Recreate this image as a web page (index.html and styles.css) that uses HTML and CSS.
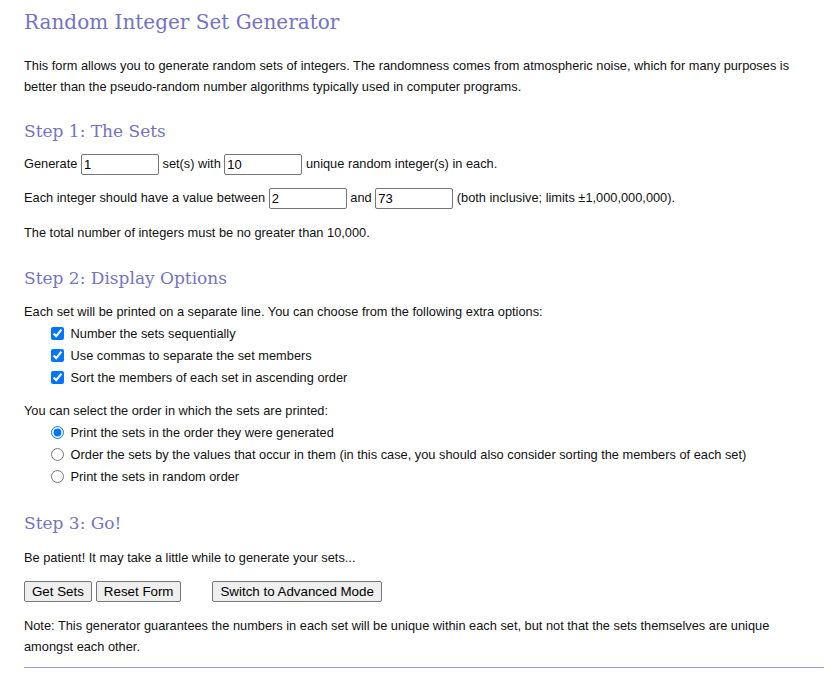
FILE: index.html
```html
<!DOCTYPE html>
<html>
<head>
<meta charset="utf-8">
<title>Random Integer Set Generator</title>
<link rel="stylesheet" href="styles.css">
</head>
<body>
<div class="page">
  <h1 class="title">Random Integer Set Generator</h1>
  <p class="intro">This form allows you to generate random sets of integers. The randomness comes from atmospheric noise, which for many purposes is better than the pseudo-random number algorithms typically used in computer programs.</p>

  <h2 class="step step1">Step 1: The Sets</h2>
  <div class="row row-a">Generate <input class="num" type="text" value="1"> set(s) with <input class="num" type="text" value="10"> unique random integer(s) in each.</div>
  <div class="row row-b">Each integer should have a value between <input class="num" type="text" value="2"> and <input class="num" type="text" value="73"> (both inclusive; limits ±1,000,000,000).</div>
  <div class="row row-c">The total number of integers must be no greater than 10,000.</div>

  <h2 class="step step2">Step 2: Display Options</h2>
  <div class="line lead1">Each set will be printed on a separate line. You can choose from the following extra options:</div>
  <div class="opts">
    <label class="line"><input type="checkbox" checked> Number the sets sequentially</label>
    <label class="line"><input type="checkbox" checked> Use commas to separate the set members</label>
    <label class="line"><input type="checkbox" checked> Sort the members of each set in ascending order</label>
  </div>
  <div class="line lead2">You can select the order in which the sets are printed:</div>
  <div class="opts">
    <label class="line"><input type="radio" name="order" checked> Print the sets in the order they were generated</label>
    <label class="line"><input type="radio" name="order"> Order the sets by the values that occur in them (in this case, you should also consider sorting the members of each set)</label>
    <label class="line"><input type="radio" name="order"> Print the sets in random order</label>
  </div>

  <h2 class="step step3">Step 3: Go!</h2>
  <div class="line lead3">Be patient! It may take a little while to generate your sets...</div>
  <div class="buttons">
    <button type="button" class="btn">Get Sets</button>
    <button type="button" class="btn">Reset Form</button>
    <button type="button" class="btn btn-adv">Switch to Advanced Mode</button>
  </div>
  <p class="note">Note: This generator guarantees the numbers in each set will be unique within each set, but not that the sets themselves are unique amongst each other.</p>
  <hr class="rule">
</div>
</body>
</html>
```

FILE: styles.css
```css
html, body {
  margin: 0;
  padding: 0;
  background: #ffffff;
}
body {
  font-family: "Liberation Sans", Arial, sans-serif;
  font-size: 12.8px;
  color: #111111;
}
.page {
  width: 800px;
  padding-left: 24px;
}
.title {
  margin: 0;
  height: 44px;
  line-height: 44px;
  font-family: "DejaVu Serif", Georgia, serif;
  font-weight: normal;
  font-size: 20px;
  color: #7373c4;
}
.intro {
  margin: 11px 0 0 0;
  line-height: 21px;
}
.step {
  margin: 0;
  height: 30px;
  line-height: 30px;
  font-family: "DejaVu Serif", Georgia, serif;
  font-weight: normal;
  font-size: 17px;
  color: #7373c4;
}
.step1 { margin-top: 19px; }
.step2 { margin-top: 13px; }
.step3 { margin-top: 20px; }
.row {
  height: 34px;
  line-height: 34px;
}
.row-a { margin-top: 1px; }
.row-c { height: 35px; line-height: 35px; }
.num {
  width: 72px;
  height: 17px;
  padding: 1px 2px;
  margin: 0;
  border: 1px solid #767676;
  border-radius: 2px;
  font-family: "Liberation Sans", Arial, sans-serif;
  font-size: 13px;
  color: #000;
  vertical-align: middle;
  box-sizing: content-box;
}
.line {
  display: block;
  height: 22px;
  line-height: 22px;
  white-space: nowrap;
}
.lead1 { margin-top: 8px; }
.lead2 { margin-top: 11px; }
.lead3 { margin-top: 9px; }
.opts {
  padding-left: 23px;
}
.opts input {
  width: 13px;
  height: 13px;
  margin: 0 3px 0 4px;
  vertical-align: -2px;
  accent-color: #0075ff;
}
.buttons {
  margin-top: 11px;
  height: 22px;
  display: flex;
  align-items: center;
  gap: 4px;
}
.btn {
  height: 21px;
  padding: 0 7px;
  margin: 0;
  border: 1px solid #767676;
  border-radius: 2px;
  background: #efefef;
  font-family: "Liberation Sans", Arial, sans-serif;
  font-size: 13.33px;
  color: #000;
}
.btn-adv {
  margin-left: 27px;
}
.note {
  margin: 13px 0 0 0;
  max-width: 790px;
  line-height: 21px;
}
.rule {
  margin: 10px 0 0 0;
  border: 0;
  border-top: 1px solid #9999e6;
  height: 0;
}
```
